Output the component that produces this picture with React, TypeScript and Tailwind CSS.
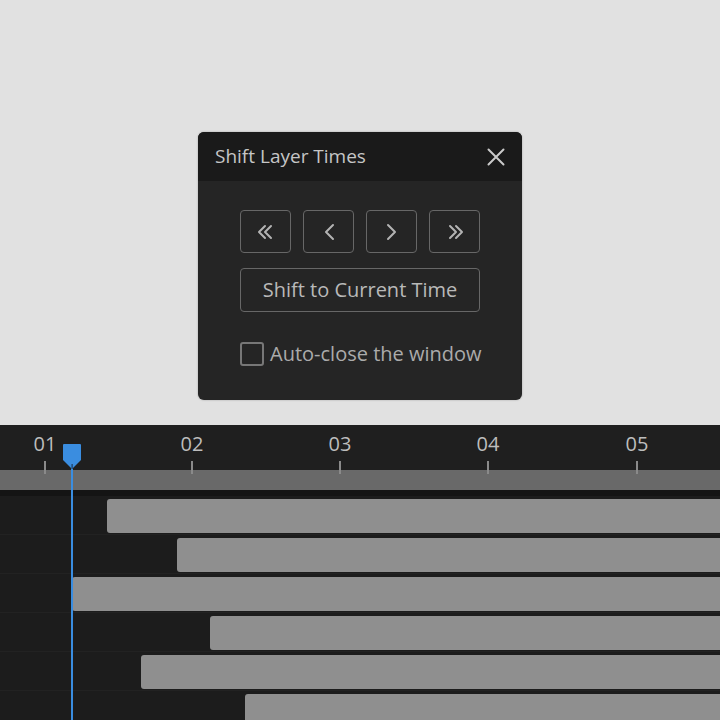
import React from "react";

const ticks = [
  { label: "01", x: 45 },
  { label: "02", x: 192 },
  { label: "03", x: 340 },
  { label: "04", x: 488 },
  { label: "05", x: 637 },
];

const bars = [107, 177, 72, 210, 141, 245];

const Chevron = ({ dir, double }: { dir: "l" | "r"; double?: boolean }) => {
  const single = (ox: number) =>
    dir === "l"
      ? `M${ox + 4} 3 L${ox - 3} 10 L${ox + 4} 17`
      : `M${ox - 4} 3 L${ox + 3} 10 L${ox - 4} 17`;
  return (
    <svg width="22" height="20" viewBox="0 0 22 20" fill="none">
      {double ? (
        <>
          <path d={dir === "l" ? "M10 4 L4 10 L10 16" : "M6 4 L12 10 L6 16"} stroke="#b3b3b3" strokeWidth="2" strokeLinecap="round" strokeLinejoin="round" />
          <path d={dir === "l" ? "M16 4 L10 10 L16 16" : "M12 4 L18 10 L12 16"} stroke="#b3b3b3" strokeWidth="2" strokeLinecap="round" strokeLinejoin="round" />
        </>
      ) : (
        <path d={single(11)} stroke="#b3b3b3" strokeWidth="2" strokeLinecap="round" strokeLinejoin="round" />
      )}
    </svg>
  );
};

export default function App() {
  return (
    <div
      className="w-[720px] h-[720px] bg-[#e1e1e1] overflow-hidden flex flex-col"
      style={{ fontFamily: '"Open Sans", "Noto Sans", sans-serif' }}
    >
      <div className="pt-[132px] flex justify-center">
        <div className="w-[324px] h-[268px] rounded-[6px] overflow-hidden bg-[#252525] flex flex-col shadow-[0_0_2px_rgba(0,0,0,0.3)]">
          <div className="h-[49px] bg-[#1a1a1a] flex items-center justify-between pl-[17px] pr-[16px]">
            <span className="text-[19px] text-[#c6c6c6]">Shift Layer Times</span>
            <svg width="20" height="20" viewBox="0 0 20 20">
              <path d="M2.5 2.5 L17.5 17.5 M17.5 2.5 L2.5 17.5" stroke="#cacaca" strokeWidth="2" strokeLinecap="round" />
            </svg>
          </div>
          <div className="px-[42px] pt-[29px] flex flex-col">
            <div className="flex justify-between">
              <button className="w-[51px] h-[43px] rounded-[4px] border-[1.5px] border-[#676767] flex items-center justify-center">
                <Chevron dir="l" double />
              </button>
              <button className="w-[51px] h-[43px] rounded-[4px] border-[1.5px] border-[#676767] flex items-center justify-center">
                <Chevron dir="l" />
              </button>
              <button className="w-[51px] h-[43px] rounded-[4px] border-[1.5px] border-[#676767] flex items-center justify-center">
                <Chevron dir="r" />
              </button>
              <button className="w-[51px] h-[43px] rounded-[4px] border-[1.5px] border-[#676767] flex items-center justify-center">
                <Chevron dir="r" double />
              </button>
            </div>
            <button className="mt-[15px] h-[44px] rounded-[4px] border-[1.5px] border-[#676767] text-[20px] text-[#b9b9b9] flex items-center justify-center">
              Shift to Current Time
            </button>
            <div className="mt-[30px] flex items-center gap-[6px]">
              <div className="w-[24px] h-[24px] rounded-[3px] border-2 border-[#777777] shrink-0" />
              <span className="text-[20px] text-[#ababab] leading-[24px] whitespace-nowrap">Auto-close the window</span>
            </div>
          </div>
        </div>
      </div>

      <div className="mt-[25px] flex-1 relative bg-[#1c1c1c] overflow-hidden">
        <div className="h-[45px] bg-[#1f1f1f] relative">
          {ticks.map((t) => (
            <div key={t.label} className="absolute top-0 flex flex-col items-center w-[40px]" style={{ left: t.x - 20 }}>
              <span className="text-[20px] leading-none mt-[9px] text-[#bdbdbd]">{t.label}</span>
              <div className="w-[1.5px] h-[13px] mt-[7px] bg-[#8a8a8a]" />
            </div>
          ))}
        </div>
        <div className="h-[20px] bg-[#696969]" />
        <div className="h-[6px] bg-[#141414]" />
        <div className="flex flex-col">
          {bars.map((x, i) => (
            <div key={i} className="h-[39px] border-b border-[#222222] pt-[3px]">
              <div className="h-[34px] bg-[#8f8f8f] rounded-l-[3px]" style={{ marginLeft: x }} />
            </div>
          ))}
        </div>

        <div className="absolute left-[71px] top-[40px] bottom-0 w-[2px] bg-[#3a8de0]" />
        <svg className="absolute left-[62px] top-[19px]" width="20" height="26" viewBox="0 0 20 26">
          <path d="M1 1 Q1 0 2 0 L18 0 Q19 0 19 1 L19 16 L11 24 L9 24 L1 16 Z" fill="#3a8de0" />
          <rect x="9.5" y="20" width="1.2" height="5" fill="#1a3a5a" />
        </svg>
      </div>
    </div>
  );
}
